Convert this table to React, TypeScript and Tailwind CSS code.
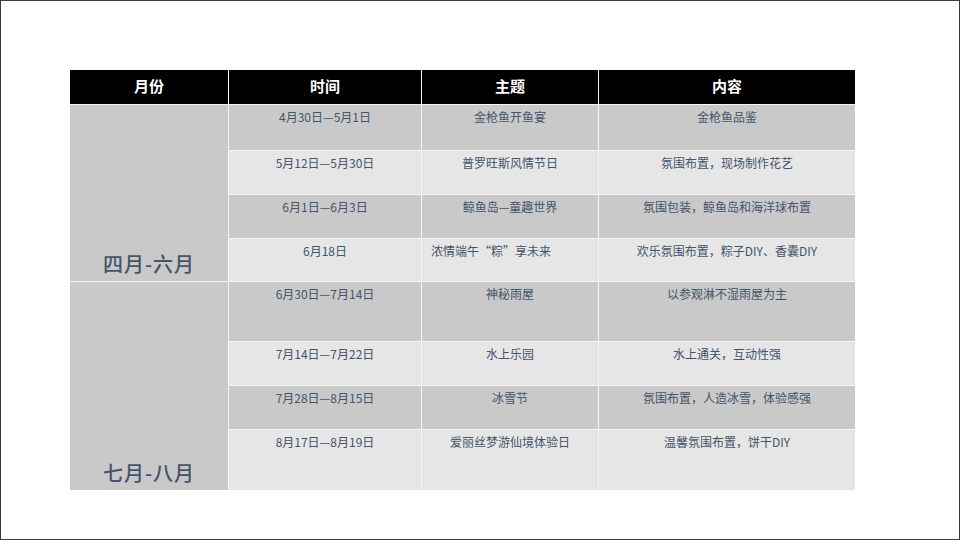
const rows1 = [
  { time: '4月30日—5月1日', theme: '金枪鱼开鱼宴', content: '金枪鱼品鉴', dark: true },
  { time: '5月12日—5月30日', theme: '普罗旺斯风情节日', content: '氛围布置，现场制作花艺', dark: false },
  { time: '6月1日—6月3日', theme: '鲸鱼岛—童趣世界', content: '氛围包装，鲸鱼岛和海洋球布置', dark: true },
  { time: '6月18日', theme: '浓情端午“粽”享未来', content: '欢乐氛围布置，粽子DIY、香囊DIY', dark: false, left: true },
];

const rows2 = [
  { time: '6月30日—7月14日', theme: '神秘雨屋', content: '以参观淋不湿雨屋为主', dark: true },
  { time: '7月14日—7月22日', theme: '水上乐园', content: '水上通关，互动性强', dark: false },
  { time: '7月28日—8月15日', theme: '冰雪节', content: '氛围布置，人造冰雪，体验感强', dark: true },
  { time: '8月17日—8月19日', theme: '爱丽丝梦游仙境体验日', content: '温馨氛围布置，饼干DIY', dark: false },
];

type Row = { time: string; theme: string; content: string; dark: boolean; left?: boolean };

function Cells({ r }: { r: Row }) {
  const bg = r.dark ? 'bg-[#c9c9c9]' : 'bg-[#e6e6e6]';
  return (
    <>
      <div className={`${bg} pt-[4px] text-center`}>{r.time}</div>
      <div className={`${bg} pt-[4px] ${r.left ? 'pl-[9px] text-left' : 'text-center'}`}>{r.theme}</div>
      <div className={`${bg} pt-[4px] text-center`}>{r.content}</div>
    </>
  );
}

export default function App() {
  return (
    <div className="w-[960px] h-[540px] border border-[#3c3c3c] bg-white pt-[69px] pl-[69px] font-['Noto_Sans_CJK_SC',sans-serif]">
      <div className="grid grid-cols-[158px_192px_176px_256px] grid-rows-[34px_45px_43px_43px_42px_59px_43px_43px_60px] gap-px bg-[#f4f4f4] w-[785px] text-[12px] leading-[16px] text-[#44546a]">
        <div className="bg-black text-white font-bold text-[15px] flex items-center justify-center pb-[3px]">月份</div>
        <div className="bg-black text-white font-bold text-[15px] flex items-center justify-center pb-[3px]">时间</div>
        <div className="bg-black text-white font-bold text-[15px] flex items-center justify-center pb-[3px]">主题</div>
        <div className="bg-black text-white font-bold text-[15px] flex items-center justify-center pb-[3px]">内容</div>

        <div className="row-span-4 bg-[#c9c9c9] flex items-end justify-center pb-[4px] text-[20px] leading-[26px] font-medium tracking-[1px]">四月-六月</div>
        {rows1.map((r) => (
          <Cells key={r.time} r={r} />
        ))}

        <div className="row-span-4 bg-[#c9c9c9] flex items-end justify-center pb-[4px] text-[20px] leading-[26px] font-medium tracking-[1px]">七月-八月</div>
        {rows2.map((r) => (
          <Cells key={r.time} r={r} />
        ))}
      </div>
    </div>
  );
}
